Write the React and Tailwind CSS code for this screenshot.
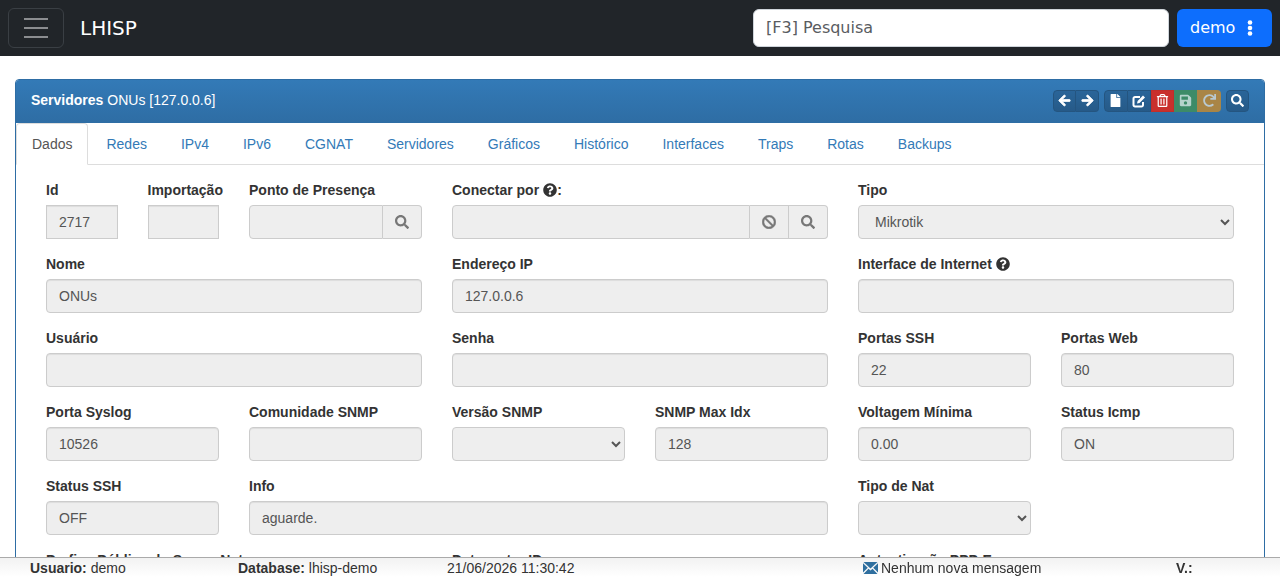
import { FaArrowLeft, FaArrowRight, FaFile, FaRegTrashAlt, FaSave, FaRedo, FaSearch, FaBan, FaQuestionCircle } from 'react-icons/fa';

const tabs = ['Redes', 'IPv4', 'IPv6', 'CGNAT', 'Servidores', 'Gráficos', 'Histórico', 'Interfaces', 'Traps', 'Rotas', 'Backups'];

const Field = ({ span, label, value, help, square }) => (
  <div className={span}>
    <label className="flex items-center gap-1 h-5 mb-[5px] font-bold text-[#333] whitespace-nowrap">
      {label}
      {help}
    </label>
    <div className={`h-[34px] px-3 flex items-center bg-[#eee] border border-[#ccc] text-[#555] shadow-[inset_0_1px_1px_rgba(0,0,0,0.075)] ${square ? '' : 'rounded'}`}>
      {value}
    </div>
  </div>
);

const SelectField = ({ span, label, value }) => (
  <div className={span}>
    <label className="block h-5 mb-[5px] font-bold text-[#333]">{label}</label>
    <select disabled defaultValue={value} className="w-full h-[34px] px-3 bg-[#eee] border border-[#ccc] rounded text-[#555] opacity-100">
      <option>{value}</option>
    </select>
  </div>
);

const LookupBtn = ({ children }) => (
  <span className="w-[39px] h-[34px] flex items-center justify-center bg-[#eee] border border-[#ccc] border-l-0 last:rounded-r text-[#777] text-sm">
    {children}
  </span>
);

const Lookup = ({ span, label, help, buttons }) => (
  <div className={span}>
    <label className="flex items-center h-5 mb-[5px] font-bold text-[#333] whitespace-nowrap">
      {label}
      {help}
    </label>
    <div className="flex">
      <div className="flex-1 h-[34px] bg-[#eee] border border-[#ccc] rounded-l" />
      {buttons.map((icon, i) => <LookupBtn key={i}>{icon}</LookupBtn>)}
    </div>
  </div>
);

const ToolBtn = ({ className, children }) => (
  <span className={`w-[23.3px] h-[22px] flex items-center justify-center text-[13px] ${className}`}>{children}</span>
);

// glyphicon style edit icon
const EditIcon = () => (
  <svg width="14" height="14" viewBox="0 0 14 14" fill="none">
    <path d="M8 3H3a1.5 1.5 0 0 0-1.5 1.5v6.5A1.5 1.5 0 0 0 3 12.500h6.500A1.500 1.500 0 0 0 11 11V8" stroke="currentColor" strokeWidth="2" />
    <path d="M5 9.500 5.600 7 11 1.500l2 2L7.500 9z" fill="currentColor" />
  </svg>
);

const MailIcon = () => (
  <svg width="15" height="12" viewBox="0 0 15 12" className="text-[#2f6f9f]">
    <path d="M0.500 0h14L7.500 6.500z" fill="currentColor" />
    <path d="M0 1.200 4.800 5.800 0 10.500zM15 1.200 10.200 5.800 15 10.500z" fill="currentColor" />
    <path d="M0.500 12 5.500 6.800 7.500 8.500 9.500 6.800 14.500 12z" fill="currentColor" />
  </svg>
);

const Kebab = () => (
  <svg width="6" height="16" viewBox="0 0 6 16" fill="currentColor">
    <circle cx="3" cy="2.500" r="2.300" />
    <circle cx="3" cy="8" r="2.300" />
    <circle cx="3" cy="13.500" r="2.300" />
  </svg>
);

const blue = 'bg-gradient-to-b from-[#2a6599] to-[#265a88] border border-[#245580] text-white';

const App = () => {
  return (
    <div className="h-[577px] overflow-hidden bg-white font-['Liberation_Sans',sans-serif] text-sm">
      <nav className="h-14 bg-[#212529] flex items-center pl-2 pr-2 font-['DejaVu_Sans',sans-serif]">
        <button className="w-14 h-10 border border-[#3a3f44] rounded-md flex flex-col items-center justify-center gap-[7px]">
          <span className="block w-6 h-0.5 bg-[#8b8d90]" />
          <span className="block w-6 h-0.5 bg-[#8b8d90]" />
          <span className="block w-6 h-0.5 bg-[#8b8d90]" />
        </button>
        <span className="ml-4 text-xl text-white">LHISP</span>
        <div className="ml-auto w-[416px] h-[38px] bg-white border border-[#ced4da] rounded-md flex items-center px-3 text-base text-[#595c5f]">
          [F3] Pesquisa
        </div>
        <button className="ml-2 w-[95px] h-[38px] pl-[13px] bg-[#0d6efd] rounded-md text-white text-base flex items-center gap-[12px]">
          demo <Kebab />
        </button>
      </nav>

      <div className="mt-[23px] mx-[15px] border border-[#2e6da4] rounded">
        <div className="h-[43px] flex items-center justify-between pb-[3px] pl-[15px] pr-[15px] bg-gradient-to-b from-[#337ab7] to-[#2e6da4] text-white rounded-t-[3px]">
          <span><b>Servidores</b> ONUs [127.0.0.6]</span>
          <div className="flex gap-[5px] mt-px">
            <div className="flex">
              <ToolBtn className={`${blue} rounded-l`}><FaArrowLeft stroke="currentColor" strokeWidth={30} /></ToolBtn>
              <ToolBtn className={`${blue} rounded-r border-l-0`}><FaArrowRight stroke="currentColor" strokeWidth={30} /></ToolBtn>
            </div>
            <div className="flex">
              <ToolBtn className={`${blue} rounded-l`}><FaFile /></ToolBtn>
              <ToolBtn className={`${blue} border-l-0`}><EditIcon /></ToolBtn>
              <ToolBtn className="bg-[#c9302c] border border-[#c12e2a] text-white"><FaRegTrashAlt /></ToolBtn>
              <ToolBtn className="bg-[#3d8b68] text-[#b5d3cc]"><FaSave /></ToolBtn>
              <ToolBtn className="bg-[#a98546] rounded-r text-[#b9c9d0]"><FaRedo /></ToolBtn>
            </div>
            <ToolBtn className={`${blue} rounded`}><FaSearch /></ToolBtn>
          </div>
        </div>

        <div className="h-[42px] flex border-b border-[#ddd]">
          <span className="h-[42px] mr-px px-[15px] flex items-center bg-white border border-[#ddd] border-b-white rounded-t text-[#555]">Dados</span>
          {tabs.map((t) => (
            <a key={t} className="px-[17px] flex items-center text-[#337ab7]">{t}</a>
          ))}
        </div>

        <div className="grid grid-cols-12 gap-x-[30px] gap-y-[15px] pt-[15px] px-[30px] pb-10">
          <Field span="col-span-1" label="Id" value="2717" square />
          <Field span="col-span-1" label="Importação" square />
          <Lookup span="col-span-2" label="Ponto de Presença" buttons={[<FaSearch />]} />
          <Lookup span="col-span-4" label="Conectar por" help={<><FaQuestionCircle className="ml-1 text-[14px]" />:</>} buttons={[<FaBan stroke="currentColor" strokeWidth={20} />, <FaSearch />]} />
          <SelectField span="col-span-4" label="Tipo" value="Mikrotik" />

          <Field span="col-span-4" label="Nome" value="ONUs" />
          <Field span="col-span-4" label="Endereço IP" value="127.0.0.6" />
          <Field span="col-span-4" label="Interface de Internet" help={<FaQuestionCircle className="text-[14px]" />} />

          <Field span="col-span-4" label="Usuário" />
          <Field span="col-span-4" label="Senha" />
          <Field span="col-span-2" label="Portas SSH" value="22" />
          <Field span="col-span-2" label="Portas Web" value="80" />

          <Field span="col-span-2" label="Porta Syslog" value="10526" />
          <Field span="col-span-2" label="Comunidade SNMP" />
          <SelectField span="col-span-2" label="Versão SNMP" />
          <Field span="col-span-2" label="SNMP Max Idx" value="128" />
          <Field span="col-span-2" label="Voltagem Mínima" value="0.00" />
          <Field span="col-span-2" label="Status Icmp" value="ON" />

          <Field span="col-span-2" label="Status SSH" value="OFF" />
          <Field span="col-span-6" label="Info" value="aguarde." />
          <SelectField span="col-span-2" label="Tipo de Nat" />
          <div className="col-span-2" />

          <Field span="col-span-4" label="Prefixo Público do Server Nat" />
          <Field span="col-span-4" label="Datacenter ID" />
          <Field span="col-span-4" label="Autenticação PPP-E" />
        </div>
      </div>

      <footer className="fixed bottom-0 inset-x-0 h-5 bg-gradient-to-b from-[#f2f2f2] to-white border-t border-[#aaa] flex items-center text-[#333]">
        <span className="ml-[30px] w-[208px]"><b>Usuario:</b> demo</span>
        <span className="w-[209px]"><b>Database:</b> lhisp-demo</span>
        <span className="w-[416px]">21/06/2026 11:30:42</span>
        <span className="w-[313px] flex items-center gap-[3px]"><MailIcon /> Nenhum nova mensagem</span>
        <b>V.:</b>
      </footer>
    </div>
  );
};

export default App;
